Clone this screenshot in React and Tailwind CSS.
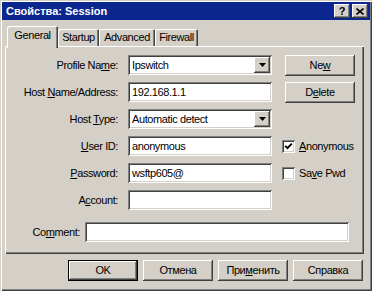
import React from "react";

// classic 3D bevels
const raised =
  "shadow-[inset_-1px_-1px_0_#404040,inset_1px_1px_0_#ffffff,inset_-2px_-2px_0_#808080,inset_2px_2px_0_#d4d0c8]";
const sunken =
  "shadow-[inset_1px_1px_0_#808080,inset_-1px_-1px_0_#ffffff,inset_2px_2px_0_#404040,inset_-2px_-2px_0_#d4d0c8]";

const Label = ({ children }) => (
  <div className="flex items-center justify-end whitespace-nowrap">
    <span>{children}</span>
  </div>
);

const Field = ({ value }) => (
  <div className={`h-[20px] bg-white flex items-center pl-[4px] whitespace-nowrap ${sunken}`}>
    {value}
  </div>
);

const Combo = ({ value }) => (
  <div className={`h-[20px] bg-white flex items-center p-[2px] ${sunken}`}>
    <span className="flex-1 pl-[2px] whitespace-nowrap">{value}</span>
    <div className={`w-[16px] h-[16px] bg-[#d4d0c8] flex items-center justify-center ${raised}`}>
      <svg width="7" height="4" viewBox="0 0 7 4">
        <polygon points="0,0 7,0 3.5,4" fill="#000" />
      </svg>
    </div>
  </div>
);

const Button = ({ children, isDefault }) => (
  <div
    className={`w-[70px] h-[21px] bg-[#d4d0c8] flex items-center justify-center whitespace-nowrap ${
      isDefault
        ? "shadow-[inset_0_0_0_1px_#000000,inset_-2px_-2px_0_#404040,inset_2px_2px_0_#ffffff,inset_-3px_-3px_0_#808080]"
        : raised
    }`}
  >
    <span>{children}</span>
  </div>
);

const Check = ({ checked, children }) => (
  <div className="flex items-center gap-[4px] whitespace-nowrap">
    <div className={`w-[13px] h-[13px] bg-white flex items-center justify-center ${sunken}`}>
      {checked && (
        <svg width="9" height="9" viewBox="0 0 9 9">
          <path d="M1.2 3.8 L3.5 6.2 L7.8 1.6" stroke="#000" strokeWidth="1.9" fill="none" />
        </svg>
      )}
    </div>
    <span>{children}</span>
  </div>
);

const Tab = ({ children, w, active }) => (
  <div
    className={`flex items-center justify-center rounded-t-[2px] bg-[#d4d0c8] ${w} ${
      active
        ? "h-[22px] pb-[3px] shadow-[inset_1px_1px_0_#ffffff,inset_-1px_0_0_#404040,inset_-2px_0_0_#808080]"
        : "h-[17px] mb-[2px] shadow-[inset_1px_1px_0_#ffffff,inset_-1px_0_0_#404040,inset_-2px_0_0_#808080]"
    }`}
  >
    {children}
  </div>
);

export default function App() {
  return (
    <div
      className="w-[372px] h-[291px] bg-[#d4d0c8] p-[2px] flex flex-col text-black text-[11px] tracking-[-0.4px] leading-none font-['Liberation_Sans',Arial,sans-serif] shadow-[inset_1px_1px_0_#d4d0c8,inset_2px_2px_0_#ffffff,inset_-1px_-1px_0_#404040,inset_-2px_-2px_0_#808080]"
    >
      {/* title bar */}
      <div className="h-[18px] bg-[#0c2690] flex items-center pl-[4px] pr-[2px]">
        <span className="text-white font-bold text-[11px] tracking-normal">Свойства: Session</span>
        <div className="ml-auto flex gap-[2px]">
          <div className={`w-[16px] h-[14px] bg-[#d4d0c8] flex items-center justify-center font-bold text-[11px] ${raised}`}>
            ?
          </div>
          <div className={`w-[16px] h-[14px] bg-[#d4d0c8] flex items-center justify-center ${raised}`}>
            <svg width="8" height="7" viewBox="0 0 8 7">
              <path d="M0.5 0.5 L7.5 6.5 M7.5 0.5 L0.5 6.5" stroke="#000" strokeWidth="1.6" />
            </svg>
          </div>
        </div>
      </div>

      <div className="pl-[3px] pr-[6px] pt-[6px]">
        {/* tabs */}
        <div className="flex items-end h-[22px] -mb-[2px] relative z-10 pl-[2px]">
          <Tab w="w-[51px]" active>General</Tab>
          <Tab w="w-[41px]">Startup</Tab>
          <Tab w="w-[56px]">Advanced</Tab>
          <Tab w="w-[43px]">Firewall</Tab>
        </div>

        {/* panel */}
        <div className="h-[208px] pt-[9px] pl-[2px] shadow-[inset_1px_1px_0_#ffffff,inset_-1px_-1px_0_#404040,inset_-2px_-2px_0_#808080]">
          <div className="grid grid-cols-[111px_144px_1fr] gap-x-[10px] gap-y-[7px] auto-rows-[20px]">
            <Label>
              Profile Na<u>m</u>e:
            </Label>
            <Combo value="Ipswitch" />
            <div className="pl-[3px]">
              <Button>
                Ne<u>w</u>
              </Button>
            </div>

            <Label>
              Host <u>N</u>ame/Address:
            </Label>
            <Field value="192.168.1.1" />
            <div className="pl-[3px]">
              <Button>
                D<u>e</u>lete
              </Button>
            </div>

            <Label>
              Host <u>T</u>ype:
            </Label>
            <Combo value="Automatic detect" />
            <div />

            <Label>
              <u>U</u>ser ID:
            </Label>
            <Field value="anonymous" />
            <div className="flex items-center">
              <Check checked>
                <u>A</u>nonymous
              </Check>
            </div>

            <Label>
              <u>P</u>assword:
            </Label>
            <Field value="wsftp605@" />
            <div className="flex items-center">
              <Check>
                Sa<u>v</u>e Pwd
              </Check>
            </div>

            <Label>
              A<u>c</u>count:
            </Label>
            <Field value="" />
            <div />
          </div>

          <div className="flex items-center gap-[5px] mt-[12px]">
            <div className="w-[73px] text-right whitespace-nowrap">
              Co<u>m</u>ment:
            </div>
            <div className="w-[264px]">
              <Field value="" />
            </div>
          </div>
        </div>
      </div>

      {/* dialog buttons */}
      <div className="flex justify-end gap-[5px] pr-[7px] mt-[6px]">
        <Button isDefault>OK</Button>
        <Button>Отмена</Button>
        <Button>
          При<u>м</u>енить
        </Button>
        <Button>Справка</Button>
      </div>
    </div>
  );
}
